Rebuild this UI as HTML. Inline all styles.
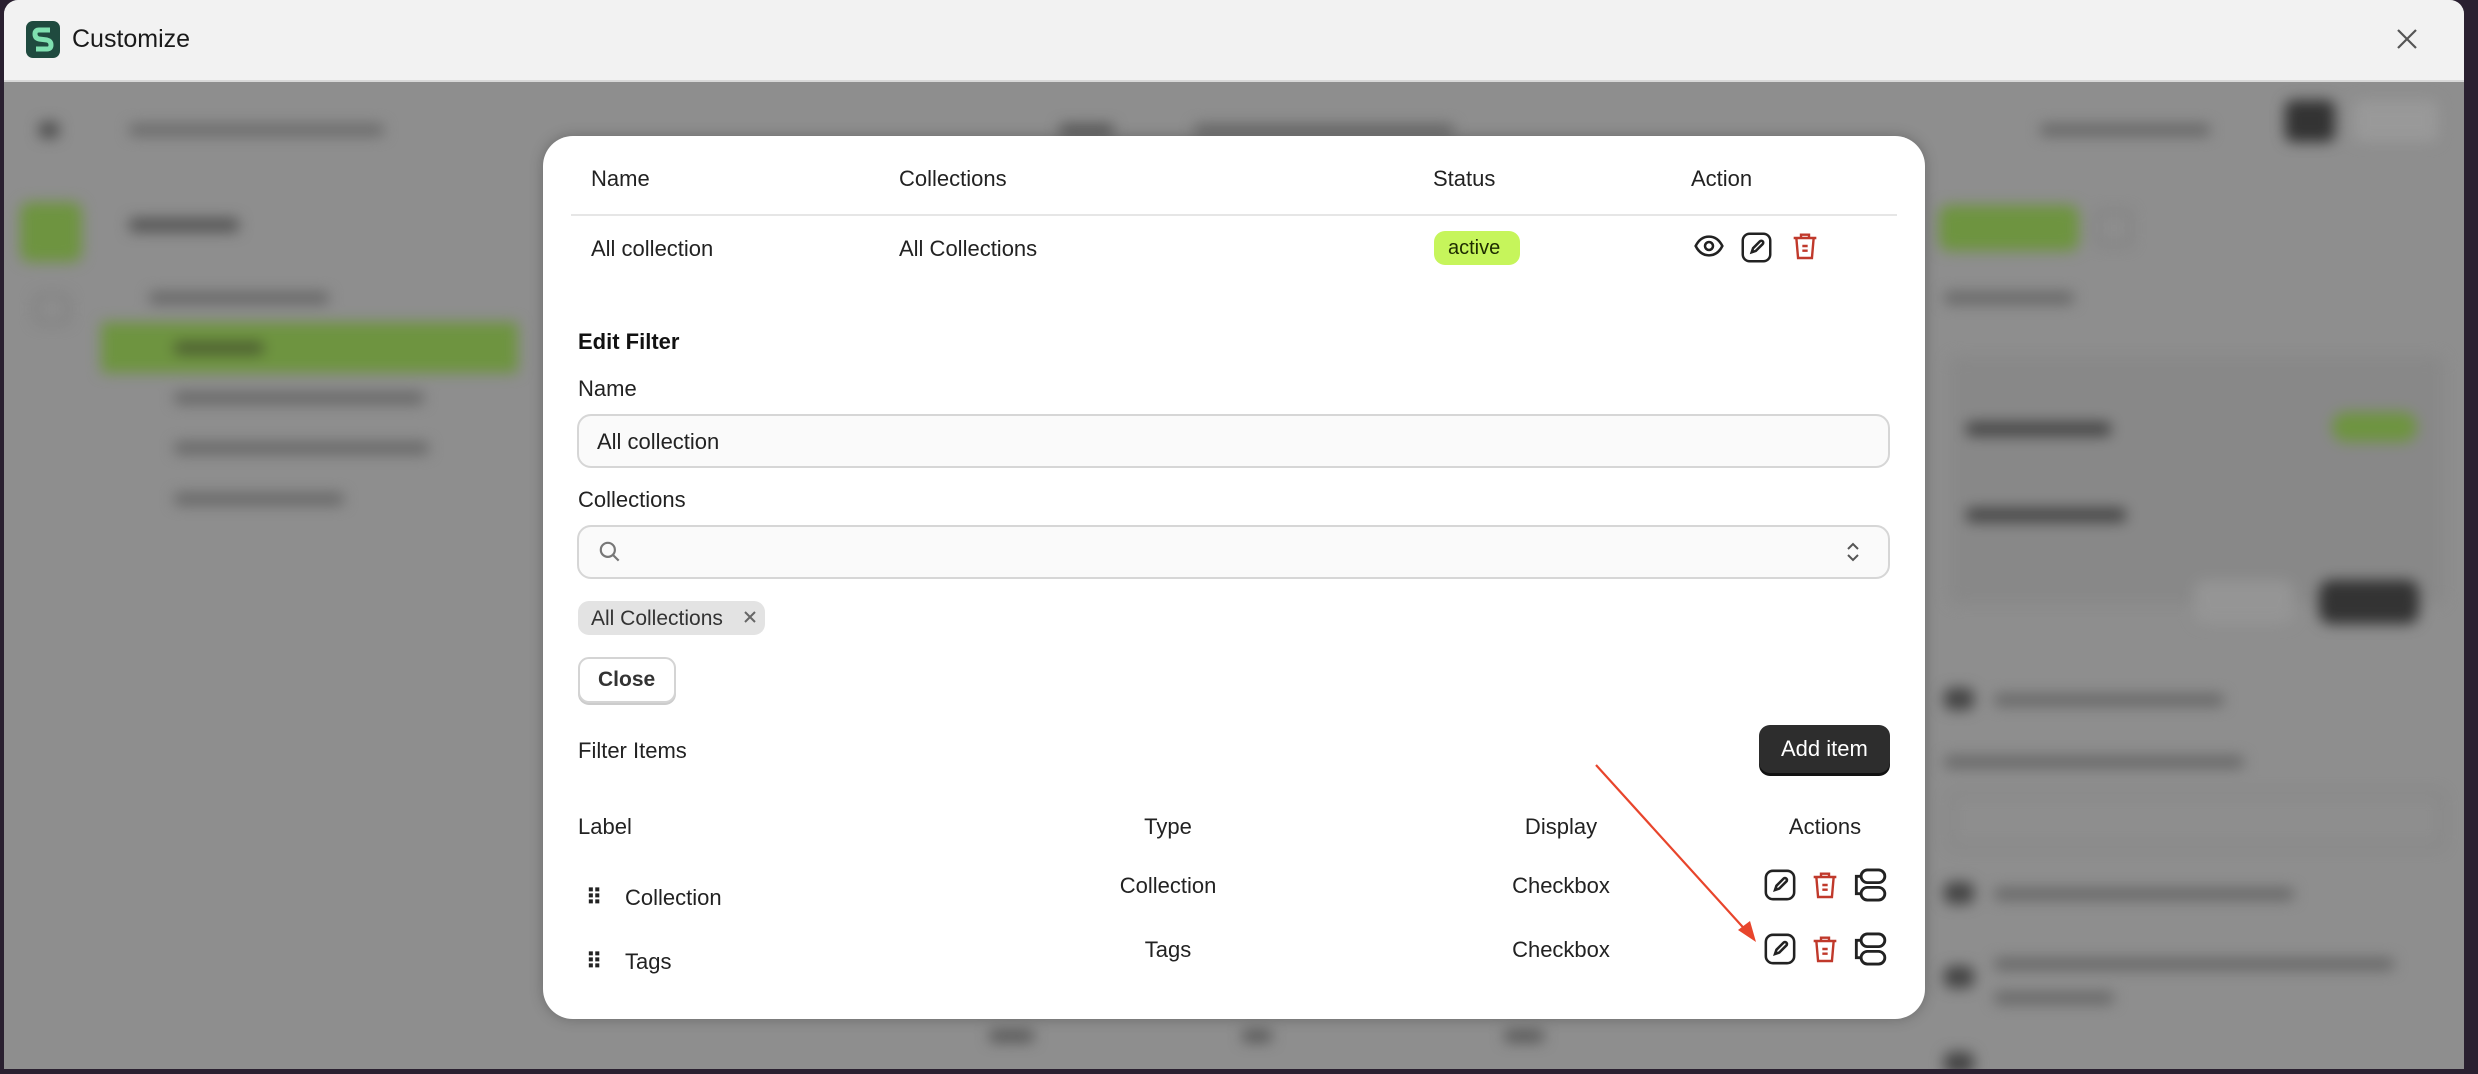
<!DOCTYPE html>
<html><head><meta charset="utf-8"><style>
*{box-sizing:border-box;margin:0;padding:0}
body{width:2478px;height:1074px;overflow:hidden;background:#2a2030;font-family:"Liberation Sans",Arial,sans-serif;position:relative}
.win{position:absolute;left:4px;top:0;width:2460px;height:1069px;background:#8e8e8e;border-radius:14px 14px 0 0;overflow:hidden}
.hdr{position:absolute;left:0;top:0;width:100%;height:82px;background:#f2f2f2;border-bottom:2px solid #d8d8d8}
.a{position:absolute}
.blur{filter:blur(7px)}
.bt{background:#4d4d4d;height:12px;border-radius:5px;position:absolute}
.m{position:absolute;left:543px;top:136px;width:1382px;height:883px;background:#fff;border-radius:30px;box-shadow:0 0 14px rgba(0,0,0,.25)}
.t{position:absolute;font-size:22px;color:#222;white-space:nowrap}
.c{transform:translateX(-50%)}
.inp{position:absolute;border:2px solid #d6d6d6;border-radius:14px;background:#fafafa}
</style></head><body>
<div class="win">
 <div class="hdr">
  <div class="a" style="left:22px;top:21px;width:34px;height:37px;background:#1f4a3f;border-radius:7px"></div>
  <svg class="a" style="left:22px;top:21px" width="34" height="37" viewBox="0 0 34 37"><path d="M24 9 H13 Q9 9 9 13 Q9 17 13 18 L21 19 Q25 20 25 24 Q25 28 21 28 H10" fill="none" stroke="#7fe0b0" stroke-width="5"/></svg>
  <div class="t" style="left:68px;top:25px;font-size:25px;color:#1a1a1a">Customize</div>
  <svg class="a" style="left:2392px;top:28px" width="22" height="22"><path d="M2 2L20 20M20 2L2 20" stroke="#555" stroke-width="2.2"/></svg>
 </div>
 <div class="blur">
  <div class="bt" style="left:35px;top:122px;width:20px;height:16px"></div>
  <div class="bt" style="left:125px;top:124px;width:255px;background:#6a6a6a"></div>
  <div class="a" style="left:16px;top:202px;width:62px;height:60px;background:#6e9440;border-radius:10px"></div>
  <div class="a" style="left:30px;top:294px;width:36px;height:30px;border:3px solid #777;border-radius:8px"></div>
  <div class="bt" style="left:125px;top:218px;width:110px;height:14px;background:#555"></div>
  <div class="bt" style="left:145px;top:292px;width:180px;background:#666"></div>
  <div class="a" style="left:97px;top:322px;width:417px;height:51px;background:#6e9440;border-radius:4px"></div>
  <div class="bt" style="left:170px;top:342px;width:90px;background:#4a5a30"></div>
  <div class="bt" style="left:170px;top:392px;width:250px;background:#666"></div>
  <div class="bt" style="left:170px;top:442px;width:255px;background:#666"></div>
  <div class="bt" style="left:170px;top:493px;width:170px;background:#666"></div>
  <div class="bt" style="left:1055px;top:124px;width:55px;background:#555"></div>
  <div class="bt" style="left:1190px;top:124px;width:260px;background:#666"></div>
  <div class="bt" style="left:2036px;top:124px;width:170px;background:#666"></div>
  <div class="a" style="left:2281px;top:100px;width:50px;height:42px;background:#333;border-radius:8px"></div>
  <div class="a" style="left:2350px;top:100px;width:84px;height:42px;background:#999;border-radius:8px"></div>
  <div class="a" style="left:1935px;top:205px;width:140px;height:46px;background:#6e9440;border-radius:10px"></div>
  <div class="a" style="left:2092px;top:210px;width:36px;height:36px;border:3px solid #7a7a7a;border-radius:6px"></div>
  <div class="bt" style="left:1940px;top:292px;width:130px;background:#666"></div>
  <div class="a" style="left:1945px;top:356px;width:495px;height:248px;background:#888;border-radius:10px"></div>
  <div class="bt" style="left:1962px;top:422px;width:145px;height:14px;background:#444"></div>
  <div class="a" style="left:2328px;top:412px;width:85px;height:30px;background:#6e9440;border-radius:14px"></div>
  <div class="bt" style="left:1962px;top:508px;width:160px;height:14px;background:#444"></div>
  <div class="a" style="left:2190px;top:580px;width:100px;height:44px;background:#959595;border-radius:12px"></div>
  <div class="a" style="left:2315px;top:580px;width:100px;height:44px;background:#333;border-radius:12px"></div>
  <div class="a" style="left:1940px;top:688px;width:30px;height:22px;background:#444;border-radius:8px"></div>
  <div class="bt" style="left:1990px;top:694px;width:230px;background:#666"></div>
  <div class="bt" style="left:1940px;top:756px;width:300px;background:#666"></div>
  <div class="a" style="left:1945px;top:792px;width:495px;height:56px;border:2px solid #7a7a7a;border-radius:8px"></div>
  <div class="a" style="left:1940px;top:882px;width:30px;height:22px;background:#444;border-radius:8px"></div>
  <div class="bt" style="left:1990px;top:888px;width:300px;background:#666"></div>
  <div class="a" style="left:1940px;top:966px;width:30px;height:22px;background:#444;border-radius:8px"></div>
  <div class="bt" style="left:1990px;top:958px;width:400px;background:#666"></div>
  <div class="bt" style="left:1990px;top:992px;width:120px;background:#666"></div>
  <div class="a" style="left:1940px;top:1052px;width:30px;height:22px;background:#444;border-radius:8px"></div>
  <div class="bt" style="left:985px;top:1030px;width:45px;background:#555"></div>
  <div class="bt" style="left:1238px;top:1030px;width:30px;background:#555"></div>
  <div class="bt" style="left:1500px;top:1030px;width:40px;background:#555"></div>
 </div>
</div>
<div class="m">
 <div class="t" style="left:48px;top:30px">Name</div>
 <div class="t" style="left:356px;top:30px">Collections</div>
 <div class="t" style="left:890px;top:30px">Status</div>
 <div class="t" style="left:1148px;top:30px">Action</div>
 <div class="a" style="left:28px;top:78px;width:1326px;height:2px;background:#e6e6e6"></div>
 <div class="t" style="left:48px;top:100px">All collection</div>
 <div class="t" style="left:356px;top:100px">All Collections</div>
 <div class="a" style="left:891px;top:95px;width:86px;height:34px;background:#c6f55b;border-radius:11px"></div>
 <div class="t" style="left:905px;top:101px;font-size:20px;color:#1d2b00">active</div>
 <svg class="a" style="left:1150px;top:94px" width="32" height="32" viewBox="0 0 24 24" fill="none" stroke="#222" stroke-width="1.9"><path d="M2 12C4.5 7 8 5 12 5s7.5 2 10 7c-2.5 5-6 7-10 7s-7.5-2-10-7z"/><circle cx="12" cy="12" r="3"/></svg>
 <svg class="a" style="left:1197px;top:95px" width="33" height="33" viewBox="0 0 24 24" fill="none" stroke="#222" stroke-width="1.8"><rect x="2" y="2" width="20" height="20" rx="5"/><path d="M8.5 15.5l1-3 5-5a1.4 1.4 0 012 2l-5 5z"/></svg>
 <svg class="a" style="left:1246px;top:94px" width="32" height="32" viewBox="0 0 24 24" fill="none" stroke="#c0392b" stroke-width="1.8"><path d="M3.5 6h17M9 6V3.5h6V6M5.5 6l1.3 15h10.4l1.3-15M10 12h4M10 15.5h4"/></svg>

 <div class="t" style="left:35px;top:193px;font-weight:bold;color:#111">Edit Filter</div>
 <div class="t" style="left:35px;top:240px">Name</div>
 <div class="inp" style="left:34px;top:278px;width:1313px;height:54px"></div>
 <div class="t" style="left:54px;top:293px">All collection</div>
 <div class="t" style="left:35px;top:351px">Collections</div>
 <div class="inp" style="left:34px;top:389px;width:1313px;height:54px"></div>
 <svg class="a" style="left:54px;top:403px" width="26" height="26" viewBox="0 0 24 24" fill="none" stroke="#777" stroke-width="2"><circle cx="10" cy="10" r="6.5"/><path d="M15 15l5 5"/></svg>
 <svg class="a" style="left:1300px;top:403px" width="20" height="26" viewBox="0 0 20 26" fill="none" stroke="#555" stroke-width="2"><path d="M5 10l5-5 5 5M5 16l5 5 5-5"/></svg>
 <div class="a" style="left:35px;top:465px;width:187px;height:34px;background:#e3e3e3;border-radius:11px"></div>
 <div class="t" style="left:48px;top:471px;font-size:21px;color:#333">All Collections</div>
 <svg class="a" style="left:200px;top:474px" width="14" height="14"><path d="M2 2L12 12M12 2L2 12" stroke="#666" stroke-width="2"/></svg>
 <div class="a" style="left:35px;top:521px;width:98px;height:46px;border:2px solid #d4d4d4;border-radius:11px;box-shadow:0 2px 0 #ccc;background:#fff"></div>
 <div class="t" style="left:55px;top:532px;font-size:21px;font-weight:bold;color:#333">Close</div>
 <div class="t" style="left:35px;top:602px">Filter Items</div>
 <div class="a" style="left:1216px;top:589px;width:131px;height:48px;background:#2d2d2d;border-radius:11px;box-shadow:0 3px 0 #111"></div>
 <div class="t" style="left:1238px;top:600px;color:#fff">Add item</div>
 <div class="t" style="left:35px;top:678px">Label</div>
 <div class="t c" style="left:625px;top:678px">Type</div>
 <div class="t c" style="left:1018px;top:678px">Display</div>
 <div class="t c" style="left:1282px;top:678px">Actions</div>
 <div class="t" style="left:43px;top:749px;font-size:22px;font-weight:bold;letter-spacing:-2px">⠿</div>
 <div class="t" style="left:82px;top:749px">Collection</div>
 <div class="t c" style="left:625px;top:737px">Collection</div>
 <div class="t c" style="left:1018px;top:737px">Checkbox</div>
 <div class="t" style="left:43px;top:813px;font-size:22px;font-weight:bold;letter-spacing:-2px">⠿</div>
 <div class="t" style="left:82px;top:813px">Tags</div>
 <div class="t c" style="left:625px;top:801px">Tags</div>
 <div class="t c" style="left:1018px;top:801px">Checkbox</div>
 <svg class="a" style="left:1220px;top:732px" width="34" height="34" viewBox="0 0 24 24" fill="none" stroke="#222" stroke-width="1.8"><rect x="2" y="2" width="20" height="20" rx="5"/><path d="M8.5 15.5l1-3 5-5a1.4 1.4 0 012 2l-5 5z"/></svg>
 <svg class="a" style="left:1266px;top:732px" width="32" height="34" viewBox="0 0 24 24" fill="none" stroke="#c0392b" stroke-width="1.8"><path d="M3.5 6h17M9 6V3.5h6V6M5.5 6l1.3 15h10.4l1.3-15M10 12h4M10 15.5h4"/></svg>
 <svg class="a" style="left:1307px;top:730px" width="38" height="38" viewBox="0 0 24 24" fill="none" stroke="#222" stroke-width="1.8"><rect x="7" y="2.5" width="15" height="8" rx="4"/><rect x="7" y="13.5" width="15" height="8" rx="4"/><path d="M7 6.5H4v11h3"/></svg>
 <svg class="a" style="left:1220px;top:796px" width="34" height="34" viewBox="0 0 24 24" fill="none" stroke="#222" stroke-width="1.8"><rect x="2" y="2" width="20" height="20" rx="5"/><path d="M8.5 15.5l1-3 5-5a1.4 1.4 0 012 2l-5 5z"/></svg>
 <svg class="a" style="left:1266px;top:796px" width="32" height="34" viewBox="0 0 24 24" fill="none" stroke="#c0392b" stroke-width="1.8"><path d="M3.5 6h17M9 6V3.5h6V6M5.5 6l1.3 15h10.4l1.3-15M10 12h4M10 15.5h4"/></svg>
 <svg class="a" style="left:1307px;top:794px" width="38" height="38" viewBox="0 0 24 24" fill="none" stroke="#222" stroke-width="1.8"><rect x="7" y="2.5" width="15" height="8" rx="4"/><rect x="7" y="13.5" width="15" height="8" rx="4"/><path d="M7 6.5H4v11h3"/></svg>
</div>
<svg class="a" style="left:0;top:0;pointer-events:none" width="2478" height="1074"><path d="M1596 765L1750 935" stroke="#e8452c" stroke-width="2.2"/><path d="M1756 942L1738 930L1750 921Z" fill="#e8452c"/></svg>
</body></html>
